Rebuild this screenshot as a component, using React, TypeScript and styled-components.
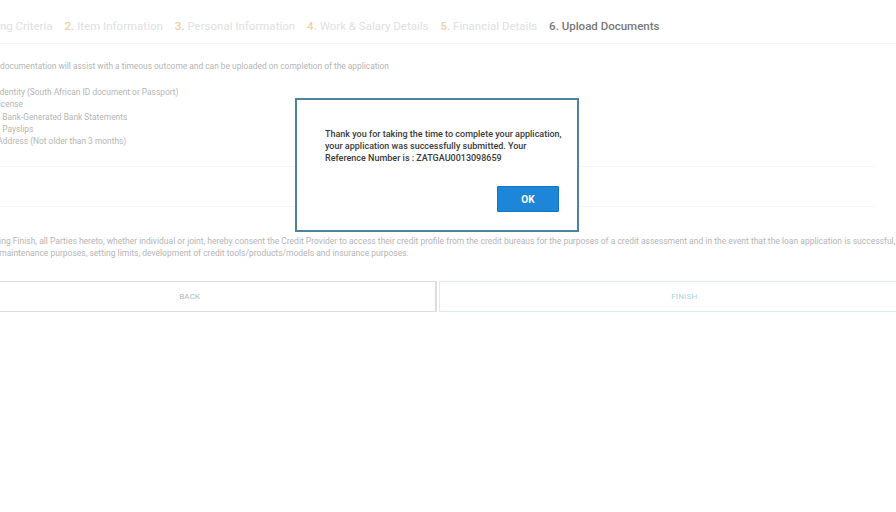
import { createGlobalStyle, styled } from "styled-components"

const GlobalStyle = createGlobalStyle`
  html, body {
    margin: 0;
    padding: 0;
    background: #fff;
    overflow: hidden;
  }
  body {
    font-family: Roboto, "Liberation Sans", Arial, sans-serif;
  }
`

// the form is wider than the window and sits scrolled a little to the right
const Page = styled.div`
  position: relative;
  width: 986px;
  height: 512px;
  margin-left: -56px;
`

const Steps = styled.div`
  display: flex;
  align-items: center;
  gap: 12px;
  height: 43px;
  padding-left: 5px;
  border-bottom: 1px solid #f4f4f4;
  font-size: 11.5px;
  white-space: nowrap;
`

const Step = styled.div<{ $active?: boolean }>`
  padding-top: 8px;
  color: ${p => (p.$active ? "#787878" : "#e0e0e0")};
  font-weight: ${p => (p.$active ? 500 : 400)};
  span {
    color: ${p => (p.$active ? "#787878" : "#f2cfa4")};
    font-weight: 500;
  }
`

const Body = styled.div`
  padding: 0 21px;
  font-size: 8.4px;
  color: #b5b5b5;
`

const Intro = styled.p`
  margin: 16px 0 0;
  line-height: 12px;
`

const DocList = styled.ul`
  list-style: none;
  margin: 14px 0 0;
  padding: 0;
  li {
    line-height: 12.25px;
  }
`

const Rule = styled.div<{ $top: number }>`
  margin-top: ${p => p.$top}px;
  margin-right: 35px;
  height: 1px;
  background: #f5f5f5;
`

const Consent = styled.p`
  margin: 28px 0 0;
  font-size: 8.5px;
  line-height: 12px;
  white-space: nowrap;
`

const Actions = styled.div`
  display: flex;
  gap: 2px;
  margin-top: 22px;
`

const ActionButton = styled.button<{ $tone: "back" | "finish" }>`
  flex: 1;
  height: 31px;
  background: #fff;
  border: 1px solid ${p => (p.$tone === "back" ? "#dcdcdc" : "#d6edf2")};
  border-right-width: ${p => (p.$tone === "back" ? "2px" : "1px")};
  font-family: inherit;
  font-size: 8px;
  letter-spacing: 0.2px;
  text-transform: uppercase;
  color: ${p => (p.$tone === "back" ? "#b5b5b5" : "#9fd6e3")};
`

const Dialog = styled.div`
  position: absolute;
  top: 98px;
  left: 351px;
  width: 280px;
  height: 130px;
  box-sizing: content-box;
  border: 2px solid #4a84a2;
  background: #fff;
  display: flex;
  flex-direction: column;
`

const Message = styled.p`
  margin: 28px 0 0 28px;
  width: 238px;
  font-size: 9px;
  line-height: 12px;
  font-weight: 500;
  color: #3a3a3a;
`

const DialogFooter = styled.div`
  display: flex;
  justify-content: flex-end;
  margin-top: auto;
  padding: 0 18px 18px 0;
`

const OkButton = styled.button`
  width: 62px;
  height: 26px;
  border: 1px solid #1673bf;
  border-radius: 1px;
  background: #1d86d8;
  color: #fff;
  font-family: inherit;
  font-size: 10px;
  font-weight: 700;
`

export default function App() {
  return (
    <>
      <GlobalStyle />
      <Page>
        <Steps>
          <Step><span>1.</span> Qualifying Criteria</Step>
          <Step><span>2.</span> Item Information</Step>
          <Step><span>3.</span> Personal Information</Step>
          <Step><span>4.</span> Work &amp; Salary Details</Step>
          <Step><span>5.</span> Financial Details</Step>
          <Step $active><span>6.</span> Upload Documents</Step>
        </Steps>
        <Body>
          <Intro>
            Required documentation will assist with a timeous outcome and can be uploaded on completion of the application
          </Intro>
          <DocList>
            <li>Proof of Identity (South African ID document or Passport)</li>
            <li>Driver's License</li>
            <li>3 Months Bank-Generated Bank Statements</li>
            <li>3 Months Payslips</li>
            <li>Proof of Address (Not older than 3 months)</li>
          </DocList>
          <Rule $top={19} />
          <Rule $top={39} />
          <Consent>
            By selecting Finish, all Parties hereto, whether individual or joint, hereby consent the Credit Provider to access their credit profile from the credit bureaus for the purposes of a credit assessment and in the event that the loan application is successful,
            <br />
            and also maintenance purposes, setting limits, development of credit tools/products/models and insurance purposes.
          </Consent>
        </Body>
        <Actions>
          <ActionButton $tone="back">Back</ActionButton>
          <ActionButton $tone="finish">Finish</ActionButton>
        </Actions>
        <Dialog>
          <Message>
            Thank you for taking the time to complete your application, your application was successfully submitted. Your Reference Number is : ZATGAU0013098659
          </Message>
          <DialogFooter>
            <OkButton>OK</OkButton>
          </DialogFooter>
        </Dialog>
      </Page>
    </>
  )
}
